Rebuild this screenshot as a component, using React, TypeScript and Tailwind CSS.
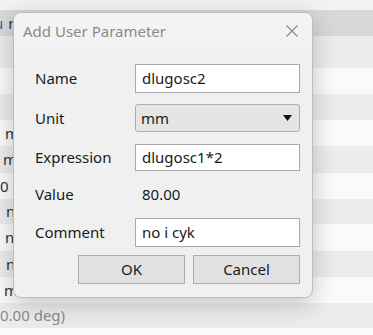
const rows = [
  { bg: 'bg-[#ececec]', h: 'h-[32px]', text: '', pl: 'pl-0' },
  { bg: 'bg-[#fafafa]', h: 'h-[26px]', text: '', pl: 'pl-0' },
  { bg: 'bg-[#ececec]', h: 'h-[26px]', text: '', pl: 'pl-0' },
  { bg: 'bg-[#fafafa]', h: 'h-[26px]', text: 'm', pl: 'pl-[5px]' },
  { bg: 'bg-[#ececec]', h: 'h-[27px]', text: 'm', pl: 'pl-[3px]' },
  { bg: 'bg-[#fafafa]', h: 'h-[26px]', text: '0', pl: 'pl-0' },
  { bg: 'bg-[#ececec]', h: 'h-[25px]', text: 'n', pl: 'pl-[6px]' },
  { bg: 'bg-[#fafafa]', h: 'h-[27px]', text: 'n', pl: 'pl-[5px]' },
  { bg: 'bg-[#ececec]', h: 'h-[26px]', text: 'n', pl: 'pl-[6px]' },
  { bg: 'bg-[#fafafa]', h: 'h-[26px]', text: 'm', pl: 'pl-[4px]' },
  { bg: 'bg-[#ececec]', h: 'h-[25px]', text: '0.00 deg)', pl: 'pl-0' },
  { bg: 'bg-[#fafafa]', h: 'h-[10px]', text: '', pl: 'pl-0' },
]

const inputBox = "w-[165px] border border-[#a8a8a8] bg-white pl-[6px] flex items-center text-[#1a1a1a]"

export default function App() {
  return (
    <div className="relative w-[373px] h-[335px] overflow-hidden bg-[#f2f2f2] text-[15px]" style={{ fontFamily: '"Noto Sans", "Open Sans", sans-serif' }}>
      <div className="h-[10px]" />
      <div className="h-[26px] bg-[#d8d8d8] flex items-center text-[#333]">
        <span className="text-[#2b6cb0] ml-[-6px]">u</span>
        <span className="pl-[5px]">n</span>
      </div>
      {rows.map((r, i) => (
        <div key={i} className={`${r.h} ${r.bg} ${r.pl} flex items-center ${r.text === '0.00 deg)' ? 'text-[#8a8a8a]' : 'text-[#333]'}`}>
          {r.text}
        </div>
      ))}

      <div className="absolute left-[13px] top-[12px] w-[300px] h-[286px] rounded-[8px] border border-[#bdbdbd] bg-[#f0f0f0] shadow-[0_6px_24px_rgba(0,0,0,0.22)] overflow-hidden flex flex-col">
        <div className="h-[36px] bg-[#f3f3f3] flex items-center justify-between pl-[9px] pr-[14px] text-[#8a8a8a]">
          <span>Add User Parameter</span>
          <svg width="12" height="12" viewBox="0 0 12 12" className="mt-[-1px]">
            <path d="M0.5 0.5 L11.5 11.5 M11.5 0.5 L0.5 11.5" stroke="#8a8a8a" strokeWidth="1.2" fill="none" />
          </svg>
        </div>

        <div className="flex flex-col pl-[21px] pt-[15px] text-[#1a1a1a]">
          <div className="flex items-center h-[29px]">
            <span className="w-[100px]">Name</span>
            <div className={`${inputBox} h-[29px]`}>dlugosc2</div>
          </div>

          <div className="flex items-center h-[28px] mt-[11px]">
            <span className="w-[100px]">Unit</span>
            <div className="w-[165px] h-[28px] border border-[#adadad] rounded-[3px] bg-[#e5e5e5] pl-[5px] pr-[7px] flex items-center justify-between">
              <span>mm</span>
              <svg width="9" height="6" viewBox="0 0 9 6"><path d="M0 0 H9 L4.5 6 Z" fill="#111" /></svg>
            </div>
          </div>

          <div className="flex items-center h-[27px] mt-[12px]">
            <span className="w-[100px]">Expression</span>
            <div className={`${inputBox} h-[27px] pl-[5px]`}>dlugosc1*2</div>
          </div>

          <div className="flex items-center h-[29px] mt-[9px]">
            <span className="w-[100px]">Value</span>
            <span className="pl-[7px]">80.00</span>
          </div>

          <div className="flex items-center h-[29px] mt-[9px]">
            <span className="w-[100px]">Comment</span>
            <div className={`${inputBox} h-[29px]`}>no i cyk</div>
          </div>

          <div className="flex h-[29px] mt-[8px] pl-[43px] gap-[8px]">
            <button className="w-[107px] h-[29px] border border-[#adadad] bg-[#e1e1e1] text-[#1a1a1a]">OK</button>
            <button className="w-[107px] h-[29px] border border-[#adadad] bg-[#e1e1e1] text-[#1a1a1a]">Cancel</button>
          </div>
        </div>
      </div>
    </div>
  )
}
